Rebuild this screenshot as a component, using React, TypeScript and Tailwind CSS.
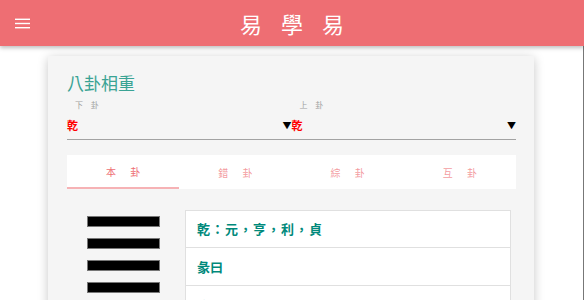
import React from "react";

const cjk = { fontFamily: '"Noto Sans CJK TC", "Noto Sans", sans-serif' };

function Select({ label }: { label: string }) {
  return (
    <div className="flex-1 flex flex-col">
      <div className="h-[20px] flex items-center pl-[8px] text-[8px] tracking-[3px] text-[#9e9e9e]">{label}</div>
      <div className="h-[20px] flex items-center justify-between">
        <span className="text-[11px] font-bold text-[#ff0000]">乾</span>
        <span className="text-[9px] text-black leading-none">▼</span>
      </div>
    </div>
  );
}

export default function App() {
  const tabs = ["本 卦", "錯 卦", "綜 卦", "互 卦"];
  return (
    <div className="w-[584px] h-[300px] overflow-hidden bg-white flex flex-col" style={cjk}>
      <header className="h-[46px] shrink-0 bg-[#ee6e73] grid grid-cols-[1fr_auto_1fr] items-center shadow-[0_2px_4px_rgba(0,0,0,0.25)] relative z-10">
        <div className="pl-[15px] flex">
          <svg width="15" height="11" viewBox="0 0 15 11">
            <rect x="0" y="0.6" width="15" height="1.4" fill="#fff" />
            <rect x="0" y="4.8" width="15" height="1.4" fill="#fff" />
            <rect x="0" y="9" width="15" height="1.4" fill="#fff" />
          </svg>
        </div>
        <div className="text-white text-[22px] tracking-[7px] pl-[7px] leading-none">易 學 易</div>
        <div />
      </header>
      <div className="flex-1 border-r border-[#777]">
        <div className="ml-[48px] w-[486px] mt-[10px] bg-[#f5f5f5] shadow-[0_2px_10px_rgba(0,0,0,0.22)] pl-[19px] pr-[18px] pt-[16px] pb-[20px]">
          <div className="text-[17px] leading-[22px] font-normal text-[#3aa394]">八卦相重</div>
          <div className="flex border-b border-[#a3a3a3] pb-[4px] mt-[1px]">
            <Select label="下 卦" />
            <Select label="上 卦" />
          </div>
          <div className="mt-[15px] h-[34px] bg-white grid grid-cols-4">
            {tabs.map((t, i) => (
              <div
                key={t}
                className={
                  i === 0
                    ? "flex items-center justify-center text-[10px] tracking-[6px] pl-[6px] text-[#ee6e73] border-b-2 border-[#f6b2b5]"
                    : "flex items-center justify-center text-[10px] tracking-[6px] pl-[6px] text-[#ee6e73]/70"
                }
              >
                {t}
              </div>
            ))}
          </div>
          <div className="flex mt-[21px]">
            <div className="w-[118px] flex flex-col items-start pl-[20px] pt-[6px] gap-[11px]">
              {[0, 1, 2, 3, 4, 5].map((i) => (
                <div key={i} className="w-[73px] h-[11px] bg-black border border-[#777]" />
              ))}
            </div>
            <div className="w-[326px] bg-white border border-[#e0e0e0] flex flex-col">
              <div className="h-[37px] flex items-center px-[11px] text-[13px] font-bold text-[#00897b] border-b border-[#e0e0e0] tracking-[1px]">乾：元，亨，利，貞</div>
              <div className="h-[38px] flex items-center px-[11px] text-[13px] font-bold text-[#00897b] border-b border-[#e0e0e0]">彖曰</div>
              <div className="h-[40px] flex items-center px-[11px] text-[13px] font-bold text-[#00897b]">文言</div>
            </div>
          </div>
        </div>
      </div>
    </div>
  );
}
